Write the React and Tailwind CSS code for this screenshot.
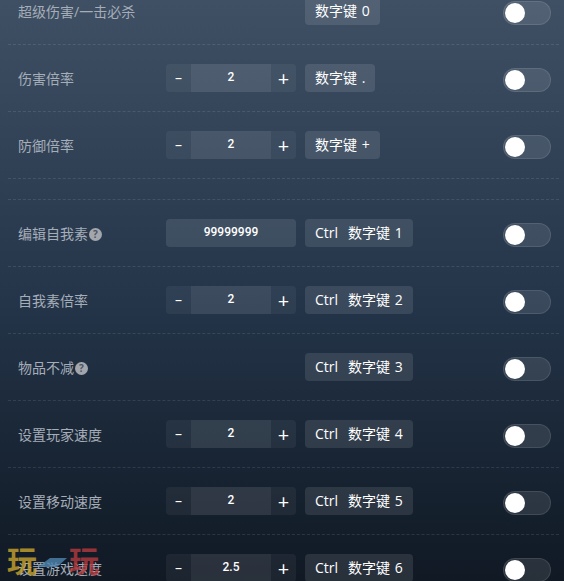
import React from "react";

const rows = [
  { label: "超级伤害/一击必杀", key: ["数字键 0"] },
  { label: "伤害倍率", step: "2", key: ["数字键 ."] },
  { label: "防御倍率", step: "2", key: ["数字键 +"] },
  { sep: true },
  { label: "编辑自我素", help: true, input: "99999999", key: ["Ctrl", "数字键 1"] },
  { label: "自我素倍率", step: "2", key: ["Ctrl", "数字键 2"] },
  { label: "物品不减", help: true, key: ["Ctrl", "数字键 3"] },
  { label: "设置玩家速度", step: "2", key: ["Ctrl", "数字键 4"] },
  { label: "设置移动速度", step: "2", key: ["Ctrl", "数字键 5"] },
  { label: "设置游戏速度", step: "2.5", key: ["Ctrl", "数字键 6"] },
];

const num = { fontFamily: 'Roboto,sans-serif' };

function Help() {
  return (
    <span className="ml-px inline-flex h-[13px] w-[13px] items-center justify-center rounded-full bg-[#a3a7ad] text-[10px] font-bold leading-none text-[#4b5563]">
      ?
    </span>
  );
}

function Stepper({ value }) {
  return (
    <div className="flex h-7 w-[130px] overflow-hidden rounded bg-white/5 text-white">
      <span className="flex w-[25px] items-center justify-center pb-px text-sm">–</span>
      <span style={num} className="flex w-20 items-center justify-center bg-white/[0.06] pb-[2px] text-xs font-medium">{value}</span>
      <span className="flex w-[25px] items-center justify-center pt-[2px] text-xl font-normal leading-none">+</span>
    </div>
  );
}

function Row({ r }) {
  return (
    <div className="flex h-[67px] items-center border-b border-dashed border-white/10 pl-[10px] pr-2">
      <div className="flex w-[148px] items-center pt-[2px] text-sm text-[#a5adb8]">
        {r.label}
        {r.help && <Help />}
      </div>
      <div className="w-[139px]">
        {r.step && <Stepper value={r.step} />}
        {r.input && (
          <div style={num} className="flex h-7 w-[130px] items-center justify-center rounded bg-white/10 pb-[2px] text-xs font-medium text-white">
            {r.input}
          </div>
        )}
      </div>
      <div className="flex-1">
        <div className="inline-flex h-7 items-center gap-[10px] rounded bg-white/10 px-[10px] text-sm text-white [word-spacing:1px]">
          {r.key.map((k) => (
            <span key={k}>{k}</span>
          ))}
        </div>
      </div>
      <div className="mt-1 flex h-6 w-12 items-center rounded-full border border-white/10 bg-white/10 pl-px">
        <span className="h-5 w-5 rounded-full bg-white" />
      </div>
    </div>
  );
}

export default function App() {
  return (
    <div
      className="relative h-[581px] w-[564px] overflow-hidden bg-gradient-to-b from-[#3f5064] via-[#25364b] to-[#101924]"
      style={{ fontFamily: '"Open Sans","Noto Sans CJK SC",sans-serif' }}
    >
      <div className="mx-[8px] mt-[-22px] w-[551px]">
        {rows.map((r, i) =>
          r.sep ? (
            <div key={i} className="h-[21px] border-b border-dashed border-white/10" />
          ) : (
            <Row key={i} r={r} />
          )
        )}
      </div>
      <div className="pointer-events-none absolute bottom-[5px] left-[7px] flex h-[30px] items-start opacity-80">
        <span className="text-[30px] font-bold leading-[30px] text-[#c9a42c]">玩</span>
        <svg width="32" height="30" viewBox="0 0 32 30" className="shrink-0">
          <path d="M1 21 L13 12 H30 L20 21 Z" fill="#4f86b0" />
        </svg>
        <span className="text-[30px] font-bold leading-[30px] text-[#b53a3d]">玩</span>
      </div>
    </div>
  );
}
